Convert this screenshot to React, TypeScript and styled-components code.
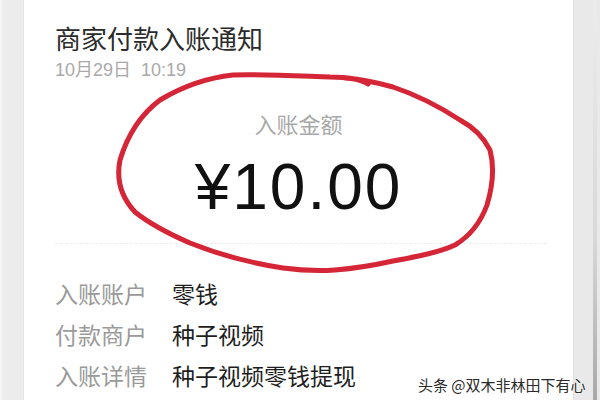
import styled, { createGlobalStyle } from 'styled-components';

const GlobalStyle = createGlobalStyle`
  html, body {
    margin: 0;
    padding: 0;
    width: 600px;
    height: 400px;
    overflow: hidden;
    background: #fff;
  }
  body {
    font-family: "Noto Sans CJK SC", "Liberation Sans", sans-serif;
  }
`;

const Page = styled.div`
  position: relative;
  display: flex;
  width: 600px;
  height: 400px;
`;

const LeftGutter = styled.div`
  width: 24px;
  background: #ececec;
  border-left: 2px solid #f6f6f6;
  box-sizing: border-box;
  border-right: 1px solid #e2e2e2;
`;

const RightGutter = styled.div`
  width: 27px;
  display: flex;
  background: #e9e9e9;
  border-left: 1px solid #e0e0e0;
  box-sizing: border-box;
`;

const RightEdge = styled.div`
  margin-left: auto;
  width: 4px;
  margin-right: 3px;
  background: linear-gradient(#ececec 0%, #d8d8d8 60%, #a8a8a8 100%);
`;

const Card = styled.div`
  flex: 1;
  display: flex;
  flex-direction: column;
  padding: 22px 0 0 31px;
  background: #fff;
`;

const Title = styled.div`
  font-size: 26px;
  line-height: 31px;
  color: #2b2b2b;
`;

const Stamp = styled.div`
  margin-top: 6px;
  font-family: "Liberation Sans", "Noto Sans CJK SC", sans-serif;
  font-size: 18px;
  line-height: 22px;
  color: #a9a9a9;
  word-spacing: 5px;
`;

const AmountBlock = styled.div`
  display: flex;
  flex-direction: column;
  align-items: center;
  margin: 28px 0 0 -31px;
`;

const AmountLabel = styled.div`
  font-size: 22px;
  line-height: 28px;
  color: #a8a8a8;
`;

const Amount = styled.div`
  margin-top: 14px;
  font-family: "Liberation Sans", "Noto Sans CJK SC", sans-serif;
  font-size: 64px;
  line-height: 72px;
  letter-spacing: 2px;
  color: #111;
`;

const Divider = styled.div`
  margin: 20px 26px 0 0;
  border-top: 1px dashed #ececec;
`;

const Rows = styled.div`
  display: flex;
  flex-direction: column;
  gap: 12px;
  margin-top: 35px;
`;

const Row = styled.div`
  display: flex;
  align-items: center;
  font-size: 23px;
  line-height: 29px;
`;

const Label = styled.span`
  width: 117px;
  color: #9a9a9a;
`;

const Value = styled.span`
  color: #1e1e1e;
`;

const Circle = styled.svg`
  position: absolute;
  left: 0;
  top: 0;
  pointer-events: none;
`;

const Watermark = styled.div`
  position: absolute;
  left: 418px;
  top: 375px;
  font-size: 15px;
  line-height: 20px;
  color: #2a2a2a;
  text-shadow: 0 0 2px #fff, 0 0 1px #fff;
`;

const rows = [
  { label: '入账账户', value: '零钱' },
  { label: '付款商户', value: '种子视频' },
  { label: '入账详情', value: '种子视频零钱提现' },
];

export default function App() {
  return (
    <>
      <GlobalStyle />
      <Page>
        <LeftGutter />
        <Card>
          <Title>商家付款入账通知</Title>
          <Stamp>10月29日 10:19</Stamp>
          <AmountBlock>
            <AmountLabel>入账金额</AmountLabel>
            <Amount>¥10.00</Amount>
          </AmountBlock>
          <Divider />
          <Rows>
            {rows.map((r) => (
              <Row key={r.label}>
                <Label>{r.label}</Label>
                <Value>{r.value}</Value>
              </Row>
            ))}
          </Rows>
        </Card>
        <RightGutter>
          <RightEdge />
        </RightGutter>
        <Circle width="600" height="400" viewBox="0 0 600 400">
          <path
            d="M368 84 C360 79 350 77 330 77 C300 76 262 74 233 75 C205 78 180 88 160 100 C140 115 127 137 120 160 C116 180 122 198 135 212 C150 224 167 233 190 243 C215 253 250 263 283 268 C305 271 320 271 335 270 C360 268 375 265 393 261 C420 256 440 252 455 245 C470 236 480 224 487 205 C493 185 494 165 490 150 C484 138 475 128 460 120 C440 107 420 96 393 87 C375 82 360 79 345 78"
            fill="none"
            stroke="#d42637"
            strokeWidth="5"
            strokeLinecap="round"
            strokeLinejoin="round"
          />
        </Circle>
        <Watermark>头条 @双木非林田下有心</Watermark>
      </Page>
    </>
  );
}
